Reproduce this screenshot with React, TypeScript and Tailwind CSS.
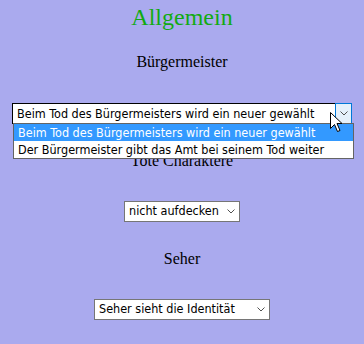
import React from 'react'

function Chevron() {
  return (
    <svg width="8" height="5" viewBox="0 0 8 5" className="shrink-0">
      <path d="M0.5 0.5 L4 4 L7.5 0.5" fill="none" stroke="#505050" strokeWidth="1" />
    </svg>
  )
}

// native-looking closed select
function Select({ value, width, className = '' }: { value: string; width: string; className?: string }) {
  return (
    <div
      className={`flex h-[21px] items-center justify-between border border-[#767676] bg-white pl-[4px] pr-[4px] text-[12.5px] leading-[16px] text-black ${width} ${className}`}
    >
      <span className="whitespace-nowrap">{value}</span>
      <Chevron />
    </div>
  )
}

const options = [
  'Beim Tod des Bürgermeisters wird ein neuer gewählt',
  'Der Bürgermeister gibt das Amt bei seinem Tod weiter',
]

const uiFont = "font-['DejaVu_Sans_Condensed','DejaVu_Sans',sans-serif]"

export default function App() {
  return (
    <div className="relative flex min-h-[344px] flex-col items-center bg-[#aaaaee] font-['Liberation_Serif',serif] text-black">
      <h1 className="mt-[3px] text-[24px] leading-[28px] text-[#11aa11]">Allgemein</h1>

      <p className="mt-[22px] text-[16px] leading-[18px]">Bürgermeister</p>

      {/* open select with its list */}
      <div className={`relative mt-[32px] w-[340px] ${uiFont}`}>
        <div className="flex h-[21px] items-stretch border border-black bg-white text-[12.5px] leading-[16px]">
          <span className="flex flex-1 items-center whitespace-nowrap pl-[4px]">{options[0]}</span>
          <span className="-my-px -mr-px flex w-[17px] items-center justify-center border border-[#0078d7] bg-[#e5f1fb]">
            <Chevron />
          </span>
        </div>
        <ul className="absolute left-px top-[20px] z-10 w-[341px] border border-[#646464] bg-white text-[12.5px] leading-[17px]">
          <li className="whitespace-nowrap bg-[#3399ff] pl-[4px] text-white">{options[0]}</li>
          <li className="whitespace-nowrap pl-[4px] text-black">{options[1]}</li>
        </ul>
      </div>

      <p className="mt-[27.6px] text-[16px] leading-[18px]">Tote Charaktere</p>

      <Select value="nicht aufdecken" width="w-[116px]" className={`mt-[31.4px] ${uiFont}`} />

      <p className="mt-[27.6px] text-[16px] leading-[18px]">Seher</p>

      <Select value="Seher sieht die Identität" width="w-[176px]" className={`mt-[31.4px] ${uiFont}`} />

      {/* mouse pointer */}
      <svg
        width="13"
        height="21"
        viewBox="0 0 13 21"
        className="pointer-events-none absolute left-[330px] top-[112px] z-20"
      >
        <path d="M0.5 0.5 L0.5 16.5 L4.5 12.5 L7.5 19.5 L10 18.5 L7 11.5 L12 11.5 Z" fill="white" stroke="black" strokeWidth="1" />
      </svg>
    </div>
  )
}
